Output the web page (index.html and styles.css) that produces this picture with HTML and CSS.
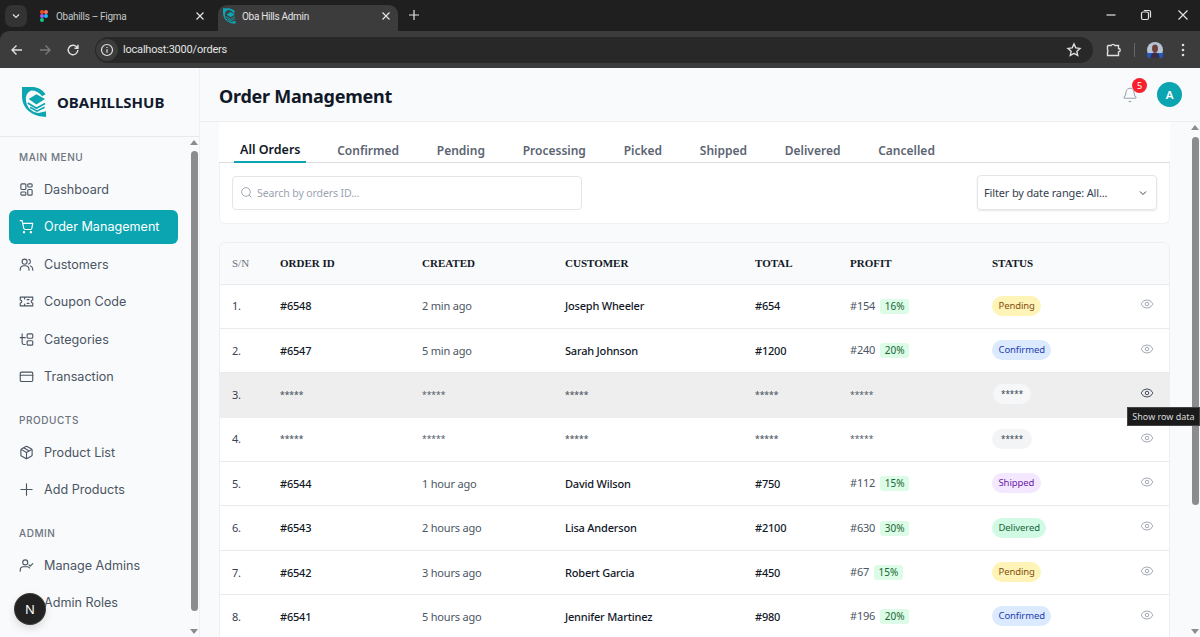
FILE: index.html
```html
<!DOCTYPE html>
<html lang="en">
<head>
<meta charset="utf-8">
<title>Oba Hills Admin</title>
<link rel="stylesheet" href="styles.css">
</head>
<body>
<svg class="defs" width="0" height="0" aria-hidden="true">
  <symbol id="logo" viewBox="0 0 26 32">
    <path fill="#0da5b2" d="M0 .5H10C16 .5 21 3 24.500 8L21 10C18 6 14 4 10 4 6 5 4 9 4 13 4 21 10 27 17 27.500L25 25.500V31.500C14 31.500 0 25 0 10z"/>
    <path fill="#0da5b2" d="M7 13 15 8l9 5-9 5.500z"/>
    <path fill="none" stroke="#0da5b2" stroke-width="1.700" d="M6 17l9 5.500 9-5M8.500 21.500l7 4 8-4"/>
  </symbol>
  <symbol id="eye" viewBox="0 0 24 24"><path d="M2.100 12.300a1 1 0 0 1 0-.6 10.700 10.700 0 0 1 19.800 0 1 1 0 0 1 0 .6 10.700 10.700 0 0 1-19.800 0"/><circle cx="12" cy="12" r="3"/></symbol>
</svg>

<header class="chrome">
  <div class="tabstrip">
    <div class="tab-search"><svg class="ci" viewBox="0 0 12 12"><path d="M3 4.500 6 7.500l3-3"/></svg></div>
    <div class="tab">
      <svg class="favicon" viewBox="0 0 10 15"><rect width="5" height="5" rx="2.500" fill="#f24e1e"/><rect x="5" width="5" height="5" rx="2.500" fill="#ff7262"/><rect y="5" width="5" height="5" rx="2.500" fill="#a259ff"/><circle cx="7.500" cy="7.500" r="2.500" fill="#1abcfe"/><rect y="10" width="5" height="5" rx="2.500" fill="#0acf83"/></svg>
      <span class="tab-title">Obahills – Figma</span>
      <svg class="tab-x" viewBox="0 0 12 12"><path d="M2.500 2.500l7 7M9.500 2.500l-7 7"/></svg>
    </div>
    <div class="tab tab-active">
      <svg class="favicon favicon-wide"><use href="#logo"/></svg>
      <span class="tab-title">Oba Hills Admin</span>
      <svg class="tab-x" viewBox="0 0 12 12"><path d="M2.500 2.500l7 7M9.500 2.500l-7 7"/></svg>
    </div>
    <svg class="tab-new" viewBox="0 0 12 12"><path d="M6 1v10M1 6h10"/></svg>
    <div class="winctl">
      <svg class="ci" viewBox="0 0 12 12"><path d="M1.500 6h9"/></svg>
      <svg class="ci" viewBox="0 0 12 12"><rect x="1.500" y="3" width="7" height="7.500" rx="1.500"/><path d="M3.800 1.500H9a1.500 1.500 0 0 1 1.500 1.500v5.500"/></svg>
      <svg class="ci ci-close" viewBox="0 0 12 12"><path d="M1.500 1.500l9 9M10.500 1.500l-9 9"/></svg>
    </div>
  </div>
  <div class="toolbar">
    <svg class="tb" viewBox="0 0 16 16"><path d="M13 8H3M7.500 3.500 3 8l4.500 4.500"/></svg>
    <svg class="tb tb-dim" viewBox="0 0 16 16"><path d="M3 8h10M8.500 3.500 13 8l-4.500 4.500"/></svg>
    <svg class="tb" viewBox="0 0 16 16"><path d="M12.800 8a4.800 4.800 0 1 1-1.400-3.400L13 6.200M13 2.800v3.500H9.500"/></svg>
    <div class="urlbar">
      <span class="url-info"><svg viewBox="0 0 14 14"><circle cx="7" cy="7" r="5.500"/><path d="M7 6.300v3.500M7 4v1"/></svg></span>
      <span class="url-text">localhost:3000/orders</span>
      <svg class="tb tb-star" viewBox="0 0 16 16"><path d="m8 2 1.800 3.900 4.200.5-3.100 2.900.8 4.200L8 11.400l-3.700 2.100.8-4.200L2 6.400l4.200-.5z"/></svg>
    </div>
    <svg class="tb tb-ext" viewBox="0 0 16 16"><path d="M2.500 3.500h3.700a2 2 0 0 1 3.600 0h3.700v3a1.700 1.700 0 0 1 0 3.400v3.600H6.500M2.500 3.500v4.200a2 2 0 0 1 0 2.600v3.200h4"/></svg>
    <span class="tb-sep"></span>
    <svg class="tb-avatar" viewBox="0 0 16 16"><circle cx="8" cy="8" r="8" fill="#b7c3d6"/><path d="M0 11h16v1a8 8 0 0 1-16 0z" fill="#1f5bc4"/><ellipse cx="8" cy="6.500" rx="3" ry="4" fill="#6f3f3a"/><path d="M3.500 16c0-4 2-5.500 4.500-5.500s4.500 1.500 4.500 5.500z" fill="#3d2c44"/></svg>
    <svg class="tb-dots" viewBox="0 0 4 16"><circle cx="2" cy="3" r="1.300"/><circle cx="2" cy="8" r="1.300"/><circle cx="2" cy="13" r="1.300"/></svg>
  </div>
</header>

<div class="app">
  <aside class="sidebar">
    <div class="brand">
      <svg class="brand-logo"><use href="#logo"/></svg>
      <span class="brand-name">OBAHILLSHUB</span>
    </div>
    <div class="side-body">
      <nav class="nav">
        <p class="nav-head">MAIN MENU</p>
        <a class="nav-item"><svg class="ni" viewBox="0 0 24 24"><rect x="3" y="3" width="8" height="9" rx="1.500"/><rect x="14" y="3" width="7" height="5" rx="1.500"/><rect x="14" y="12" width="7" height="9" rx="1.500"/><rect x="3" y="16" width="8" height="5" rx="1.500"/></svg>Dashboard</a>
        <a class="nav-item nav-active"><svg class="ni" viewBox="0 0 24 24"><circle cx="8" cy="21" r="1"/><circle cx="19" cy="21" r="1"/><path d="M2 2.500h3l2.700 12.600a2 2 0 0 0 2 1.600h8.800a2 2 0 0 0 2-1.600L22 7H6"/></svg>Order Management</a>
        <a class="nav-item"><svg class="ni" viewBox="0 0 24 24"><circle cx="9" cy="7.500" r="4"/><path d="M2 21v-1.500a6 6 0 0 1 6-5.500h2a6 6 0 0 1 6 5.500V21M15.500 3.700a4 4 0 0 1 0 7.600M18.500 14.300a6 6 0 0 1 3.500 5.200V21"/></svg>Customers</a>
        <a class="nav-item"><svg class="ni" viewBox="0 0 24 24"><path d="M2 5h20v4.500a2.500 2.500 0 0 0 0 5V19H2v-4.500a2.500 2.500 0 0 0 0-5zM9 5v3M9 16v3M13 9h3M13 15h3"/></svg>Coupon Code</a>
        <a class="nav-item"><svg class="ni" viewBox="0 0 24 24"><path d="M5 3v14a3 3 0 0 0 3 3h2M2 9h8"/><rect x="13" y="3" width="9" height="7" rx="1.500"/><path d="M15 14h5.500a1.500 1.500 0 0 1 1.500 1.500v4a1.500 1.500 0 0 1-1.500 1.500h-6a1.500 1.500 0 0 1-1.500-1.500V15z"/></svg>Categories</a>
        <a class="nav-item"><svg class="ni" viewBox="0 0 24 24"><rect x="2" y="5" width="20" height="15" rx="2"/><path d="M2 10h20"/></svg>Transaction</a>
        <p class="nav-head nav-head-next">PRODUCTS</p>
        <a class="nav-item"><svg class="ni" viewBox="0 0 24 24"><path d="M11 21.700a2 2 0 0 0 2 0l7-4A2 2 0 0 0 21 16V8a2 2 0 0 0-1-1.700l-7-4a2 2 0 0 0-2 0l-7 4A2 2 0 0 0 3 8v8a2 2 0 0 0 1 1.700zM12 22V12M3.300 7 12 12l8.700-5M7.500 4.300l9 5.200"/></svg>Product List</a>
        <a class="nav-item"><svg class="ni" viewBox="0 0 24 24"><path d="M3 12h18M12 3v18"/></svg>Add Products</a>
        <p class="nav-head nav-head-next">ADMIN</p>
        <a class="nav-item"><svg class="ni" viewBox="0 0 24 24"><circle cx="10" cy="7" r="4"/><path d="M2 21v-2a5 5 0 0 1 5-5h6a5 5 0 0 1 4 2M16 11l2 2 4-4"/></svg>Manage Admins</a>
        <a class="nav-item nav-tail"><svg class="ni" viewBox="0 0 24 24"><circle cx="12" cy="8" r="4"/></svg>Admin Roles</a>
      </nav>
      <div class="rail rail-side">
        <span class="arrow-up"></span>
        <span class="thumb thumb-side"></span>
        <span class="arrow-down"></span>
      </div>
    </div>
    <span class="next-badge">N</span>
  </aside>

  <main class="main">
    <div class="topbar">
      <h1 class="page-title">Order Management</h1>
      <div class="top-actions">
        <span class="bell">
          <svg viewBox="0 0 24 24"><path d="M10.300 21a2 2 0 0 0 3.400 0M3.300 15.300A1 1 0 0 0 4 17h16a1 1 0 0 0 .7-1.700C19.400 14 18 12.500 18 8A6 6 0 0 0 6 8c0 4.500-1.400 6-2.700 7.300"/></svg>
          <span class="bell-count">5</span>
        </span>
        <span class="avatar">A</span>
      </div>
    </div>
    <div class="content">
      <div class="page">
        <div class="tabs">
          <a class="otab otab-on">All Orders</a>
          <a class="otab">Confirmed</a>
          <a class="otab">Pending</a>
          <a class="otab">Processing</a>
          <a class="otab">Picked</a>
          <a class="otab">Shipped</a>
          <a class="otab">Delivered</a>
          <a class="otab">Cancelled</a>
        </div>
        <div class="filters">
          <div class="search">
            <svg viewBox="0 0 24 24"><circle cx="11" cy="11" r="8"/><path d="m21 21-4.300-4.300"/></svg>
            <span>Search by orders ID...</span>
          </div>
          <div class="select">
            <span>Filter by date range: All...</span>
            <svg viewBox="0 0 24 24"><path d="m6 9 6 6 6-6"/></svg>
          </div>
        </div>
        <div class="table-card">
          <table class="orders">
            <colgroup><col class="c1"><col class="c2"><col class="c3"><col class="c4"><col class="c5"><col class="c6"><col class="c7"><col class="c8"></colgroup>
            <thead>
              <tr><th class="th-sn">S/N</th><th>ORDER ID</th><th>CREATED</th><th>CUSTOMER</th><th>TOTAL</th><th>PROFIT</th><th>STATUS</th><th></th></tr>
            </thead>
            <tbody>
              <tr><td class="sn">1.</td><td class="strong">#6548</td><td class="soft">2 min ago</td><td class="strong">Joseph Wheeler</td><td class="strong">#654</td><td><span class="soft">#154</span><span class="pct">16%</span></td><td><span class="pill pending">Pending</span></td><td class="act"><svg class="eye"><use href="#eye"/></svg></td></tr>
              <tr><td class="sn">2.</td><td class="strong">#6547</td><td class="soft">5 min ago</td><td class="strong">Sarah Johnson</td><td class="strong">#1200</td><td><span class="soft">#240</span><span class="pct">20%</span></td><td><span class="pill confirmed">Confirmed</span></td><td class="act"><svg class="eye"><use href="#eye"/></svg></td></tr>
              <tr class="row-hover"><td class="sn">3.</td><td class="mask strong">*****</td><td class="mask">*****</td><td class="mask strong">*****</td><td class="mask strong">*****</td><td class="mask">*****</td><td><span class="pill masked masked-hover">*****</span></td><td class="act"><svg class="eye eye-on"><use href="#eye"/></svg></td></tr>
              <tr><td class="sn">4.</td><td class="mask strong">*****</td><td class="mask">*****</td><td class="mask strong">*****</td><td class="mask strong">*****</td><td class="mask">*****</td><td><span class="pill masked">*****</span></td><td class="act"><svg class="eye"><use href="#eye"/></svg></td></tr>
              <tr><td class="sn">5.</td><td class="strong">#6544</td><td class="soft">1 hour ago</td><td class="strong">David Wilson</td><td class="strong">#750</td><td><span class="soft">#112</span><span class="pct">15%</span></td><td><span class="pill shipped">Shipped</span></td><td class="act"><svg class="eye"><use href="#eye"/></svg></td></tr>
              <tr><td class="sn">6.</td><td class="strong">#6543</td><td class="soft">2 hours ago</td><td class="strong">Lisa Anderson</td><td class="strong">#2100</td><td><span class="soft">#630</span><span class="pct">30%</span></td><td><span class="pill delivered">Delivered</span></td><td class="act"><svg class="eye"><use href="#eye"/></svg></td></tr>
              <tr><td class="sn">7.</td><td class="strong">#6542</td><td class="soft">3 hours ago</td><td class="strong">Robert Garcia</td><td class="strong">#450</td><td><span class="soft">#67</span><span class="pct">15%</span></td><td><span class="pill pending">Pending</span></td><td class="act"><svg class="eye"><use href="#eye"/></svg></td></tr>
              <tr><td class="sn">8.</td><td class="strong">#6541</td><td class="soft">5 hours ago</td><td class="strong">Jennifer Martinez</td><td class="strong">#980</td><td><span class="soft">#196</span><span class="pct">20%</span></td><td><span class="pill confirmed">Confirmed</span></td><td class="act"><svg class="eye"><use href="#eye"/></svg></td></tr>
            </tbody>
          </table>
        </div>
      </div>
      <div class="rail rail-main">
        <span class="arrow-up"></span>
        <span class="thumb thumb-main"></span>
        <span class="arrow-down"></span>
      </div>
      <span class="tooltip">Show row data</span>
    </div>
  </main>
</div>
</body>
</html>
```

FILE: styles.css
```css
* { box-sizing: border-box; }
html, body { height: 100%; }
body {
  margin: 0;
  overflow: hidden;
  display: flex;
  flex-direction: column;
  background: #f9fafb;
  font-family: "Noto Sans", sans-serif;
}
.defs { position: absolute; }

/* Browser chrome */
.chrome { flex: none; height: 68px; background: #1f1f1f; font-family: Roboto, sans-serif; }
.tabstrip { height: 31px; display: flex; align-items: flex-end; padding-left: 5px; }
.tab-search { width: 22px; height: 22px; margin-bottom: 4px; border-radius: 7px; background: #333; display: flex; align-items: center; justify-content: center; }
.ci { width: 12px; height: 12px; fill: none; stroke: #e3e3e3; stroke-width: 1.2; }
.ci-close { margin-left: 2px; }
.tab { width: 185px; height: 26px; display: flex; align-items: center; padding: 0 6px 4px 13px; color: #c4c7c5; border-radius: 9px 9px 0 0; }
.tab-active { width: 180px; background: #3c3c3c; color: #e3e3e3; margin-left: 6px; padding-left: 5px; }
.favicon { width: 8px; height: 12px; flex: none; margin-right: 8px; }
.favicon-wide { width: 13px; height: 16px; margin-right: 6px; }
.tab-title { flex: 1; font-size: 10px; letter-spacing: -.3px; white-space: nowrap; }
.tab-x { width: 12px; height: 12px; fill: none; stroke: #e3e3e3; stroke-width: 1.2; }
.tab-new { width: 12px; height: 12px; margin: 0 0 10px 10px; fill: none; stroke: #e3e3e3; stroke-width: 1.2; }
.winctl { margin-left: auto; align-self: flex-start; display: flex; gap: 23px; padding: 9px 11px 0 0; }
.toolbar { height: 37px; background: #3c3c3c; display: flex; align-items: center; padding-left: 9px; border-radius: 9px 0 0 0; }
.tb { width: 16px; height: 16px; flex: none; fill: none; stroke: #dfdfdf; stroke-width: 1.4; margin-right: 12px; }
.tb-dim { stroke: #7a7a7a; }
.urlbar { width: 998px; height: 26px; margin-left: 2px; background: #282828; border-radius: 13px; display: flex; align-items: center; padding-left: 1px; }
.url-info { width: 22px; height: 22px; border-radius: 50%; background: #3c3c3c; display: flex; align-items: center; justify-content: center; flex: none; }
.url-info svg { width: 14px; height: 14px; fill: none; stroke: #e3e3e3; stroke-width: 1.2; }
.url-text { margin-left: 5px; font-size: 11px; letter-spacing: -.2px; color: #e3e3e3; }
.tb-star { margin: 0 0 0 auto; position: relative; left: -11px; }
.tb-ext { margin: 0 0 0 12px; }
.tb-sep { width: 1px; height: 14px; background: #666; margin-left: 13px; }
.tb-avatar { width: 16px; height: 16px; margin-left: 12px; }
.tb-dots { width: 4px; height: 16px; margin-left: 18px; fill: #dfdfdf; }

/* App frame */
.app { flex: 1; min-height: 0; display: flex; overflow: hidden; }
.sidebar { width: 200px; flex: none; position: relative; display: flex; flex-direction: column; background: #f9fafb; border-right: 1px solid #eef0f3; }
.brand { flex: none; height: 69px; display: flex; align-items: center; gap: 10px; padding-left: 22px; border-bottom: 1px solid #e7e9ec; }
.brand-logo { width: 25px; height: 32px; }
.brand-name { font-size: 15px; font-weight: 700; color: #111a2e; }
.side-body { flex: 1; min-height: 0; display: flex; }
.nav { flex: 1; min-width: 0; padding: 13px 0 0 9px; font-family: Inter, sans-serif; }
.nav-head { margin: 0 0 8px 10px; font-size: 10px; line-height: 14px; font-weight: 500; letter-spacing: .55px; color: #6b7280; }
.nav-head-next { margin-top: 19.500px; }
.nav-item { display: flex; align-items: center; gap: 10px; width: 169px; height: 34px; margin-bottom: 3.500px; padding-left: 10px; border-radius: 6px; font-size: 12.600px; color: #4b5563; white-space: nowrap; }
.nav-active { background: #0aa5b1; color: #fff; }
.ni { width: 15px; height: 15px; flex: none; fill: none; stroke: currentColor; stroke-width: 1.8; stroke-linecap: round; stroke-linejoin: round; }
.rail { flex: none; display: flex; flex-direction: column; align-items: center; }
.rail-side { width: 10px; padding: 3px 0; }
.thumb { display: block; width: 7px; background: #8c8c8c; border-radius: 4px; }
.thumb-side { height: 460px; margin-top: 6px; }
.arrow-up { width: 0; height: 0; border: 4px solid transparent; border-top: 0; border-bottom: 5px solid #8c8c8c; }
.arrow-down { width: 0; height: 0; border: 4px solid transparent; border-bottom: 0; border-top: 5px solid #8c8c8c; margin-top: auto; }
.next-badge { position: absolute; left: 15px; bottom: 13px; width: 30px; height: 30px; border-radius: 50%; background: #222; color: #fff; font-size: 13px; display: flex; align-items: center; justify-content: center; box-shadow: 0 0 0 1px #3a3a3a, 0 4px 10px rgba(0,0,0,.15); }

/* Main */
.main { flex: 1; min-width: 0; display: flex; flex-direction: column; }
.topbar { flex: none; height: 54px; display: flex; align-items: center; justify-content: space-between; padding: 2px 18px 0 19px; border-bottom: 1px solid #eceef1; }
.page-title { margin: 0; font-size: 18px; letter-spacing: -.25px; font-weight: 700; color: #101828; }
.top-actions { display: flex; align-items: center; gap: 19px; margin-top: -2px; }
.bell { position: relative; width: 16px; height: 16px; }
.bell svg { width: 16px; height: 16px; display: block; fill: none; stroke: #9ca3af; stroke-width: 1.6; }
.bell-count { position: absolute; left: 10px; top: -9px; width: 15px; height: 15px; border-radius: 50%; background: #f5222d; color: #fff; font-size: 9px; display: flex; align-items: center; justify-content: center; }
.avatar { width: 25px; height: 25px; border-radius: 50%; background: #0aa5b1; color: #fff; font-size: 11.500px; font-weight: 600; display: flex; align-items: center; justify-content: center; }
.content { flex: 1; min-height: 0; display: flex; position: relative; }
.page { flex: 1; min-width: 0; margin-left: 19px; display: flex; flex-direction: column; }
.tabs { flex: none; height: 41px; padding: 16px 0 0 15px; display: flex; gap: 23.750px; background: #fff; border-bottom: 1px solid #d9dce0; }
.otab { height: 25px; padding: 0 7px; font-size: 12px; line-height: 25px; font-weight: 600; color: #5b6472; }
.otab-on { font-size: 12.500px; color: #111827; border-bottom: 2px solid #0aa5b1; line-height: 24px; height: 25px; padding: 0 6px; }
.filters { flex: none; height: 61px; display: flex; align-items: center; justify-content: space-between; padding: 0 12px 1px; background: #fff; border: 1px solid #eff1f3; border-top: 0; border-radius: 0 0 6px 6px; }
.search { width: 350px; height: 34px; display: flex; align-items: center; gap: 4px; padding-left: 7px; border: 1px solid #e3e5e8; border-radius: 4px; font-size: 10.500px; letter-spacing: -.1px; color: #9ca3af; }
.search svg { width: 13px; height: 13px; fill: none; stroke: #9ca3af; stroke-width: 1.8; }
.select { width: 180px; height: 35px; display: flex; align-items: center; justify-content: space-between; padding: 0 7px 0 6px; border: 1px solid #e3e5e8; border-radius: 4px; box-shadow: 0 1px 2px rgba(0,0,0,.1); font-size: 11px; letter-spacing: -.15px; color: #374151; }
.select svg { width: 12px; height: 12px; fill: none; stroke: #374151; stroke-width: 2; }
.table-card { flex: none; margin-top: 18px; background: #fff; border: 1px solid #eceef1; border-bottom: 0; border-radius: 6px 6px 0 0; overflow: hidden; }
.orders { width: 950px; table-layout: fixed; border-collapse: collapse; font-size: 11px; letter-spacing: -.2px; color: #111827; }
.c1 { width: 48px; } .c2 { width: 142px; } .c3 { width: 143px; } .c4 { width: 190px; } .c5 { width: 95px; } .c6 { width: 142px; } .c7 { width: 145px; } .c8 { width: 45px; }
th { height: 41px; padding: 0 12px; background: #f9fafb; text-align: left; font-family: "Liberation Serif", serif; font-size: 11px; letter-spacing: 0; font-weight: 700; color: #111827; border-bottom: 1px solid #e9ebee; }
.orders .th-sn { font-weight: 400; color: #6b7280; }
td { height: 44.400px; padding: 0 12px 1px; border-bottom: 1px solid #e9ebee; white-space: nowrap; }
.sn { color: #374151; }
.strong { font-weight: 500; color: #111827; }
.soft { color: #4b5563; }
.orders .mask { color: #4b5563; font-size: 8.500px; letter-spacing: 0; }
.row-hover td { background: #eeeeee; border-bottom-color: #eeeeee; }
.pct { display: inline-block; margin-left: 5px; padding: 0 4.500px; height: 15px; line-height: 15px; border-radius: 3px; background: #dcfce7; color: #166534; font-size: 10px; letter-spacing: 0; }
.pill { display: inline-block; height: 20px; padding: 0 6.500px; line-height: 20px; border-radius: 10px; font-size: 9.500px; letter-spacing: -.1px; }
.pending { background: #fef4b8; color: #854d0e; }
.confirmed { background: #dbeafe; color: #1e40af; }
.shipped { background: #f3e8ff; color: #6b21a8; }
.delivered { background: #d1fae5; color: #166534; }
.masked { background: #f3f4f6; color: #374151; padding: 0 9px; font-size: 8px; letter-spacing: 0; }
.masked-hover { background: #f6f7f8; margin-left: 1px; padding: 0 8px; }
.act { text-align: right; padding: 0 16px 1px 0; }
.eye { width: 14px; height: 14px; margin-bottom: 3px; vertical-align: middle; fill: none; stroke: #9ca3af; stroke-width: 1.6; }
.eye-on { stroke: #374151; }
.rail-main { width: 30px; padding: 3px 0 3px 20px; }
.thumb-main { height: 368px; margin-top: 7px; }
.tooltip { position: absolute; right: 0; top: 285px; width: 73px; height: 19px; background: #1b1b1b; color: #d8d8d8; font-size: 9px; line-height: 18px; text-align: center; border: 1px solid #444; white-space: nowrap; overflow: hidden; }
```
